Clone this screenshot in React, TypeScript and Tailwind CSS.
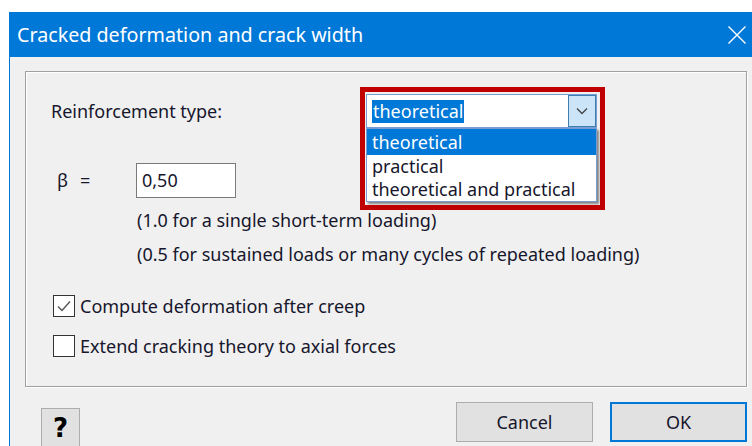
const ink = "text-[#16162c]";

function CheckBox({ checked }: { checked?: boolean }) {
  return (
    <span className="flex h-[22px] w-[22px] shrink-0 items-center justify-center border border-[#333] bg-white">
      {checked && (
        <svg width="16" height="14" viewBox="0 0 16 14">
          <path d="M2 7.5 L6 11.5 L14 2.5" fill="none" stroke="#555" strokeWidth="1.4" />
        </svg>
      )}
    </span>
  );
}

function TypeCombo() {
  const options = ["theoretical", "practical", "theoretical and practical"];
  return (
    <div className="relative h-[34px] w-[231px]">
      <div className="flex h-full w-full items-stretch border border-[#7a9cd3] bg-white">
        <div className="flex flex-1 items-center pl-[5px]">
          <span className="bg-[#0078d7] px-[1px] leading-[23px] text-white">theoretical</span>
        </div>
        <div className="flex w-[28px] items-center justify-center border border-[#3c7fb1] bg-[#cce4f7]">
          <svg width="12" height="8" viewBox="0 0 12 8">
            <path d="M1 1.5 L6 6.5 L11 1.5" fill="none" stroke="#444" strokeWidth="1.3" />
          </svg>
        </div>
      </div>

      {/* open list */}
      <div className="absolute left-0 top-full w-[231px] border border-[#7a9cd3] bg-white shadow-[2px_2px_2px_rgba(0,0,0,0.45)]">
        {options.map((o, i) => (
          <div
            key={o}
            className={
              i === 0
                ? "flex h-[26px] items-center bg-[#0078d7] pl-[5px] text-white"
                : `flex h-[23px] items-center pl-[5px] ${ink}`
            }
          >
            {o}
          </div>
        ))}
      </div>

      {/* highlight frame */}
      <div className="pointer-events-none absolute left-[-6px] top-[-7px] h-[123px] w-[245px] border-[5px] border-[#c00000]" />
    </div>
  );
}

export default function App() {
  return (
    <div
      className={`h-[446px] w-[752px] overflow-hidden bg-white pl-[9px] pt-[12px] text-[18px] ${ink}`}
      style={{ fontFamily: '"Noto Sans", "Open Sans", sans-serif' }}
    >
      <div className="flex h-[434px] flex-col">
        <div className="flex h-[45px] shrink-0 items-center justify-between bg-[#0078d7] pl-[8px] pr-[5px] text-white">
          <span className="text-[19.7px]">Cracked deformation and crack width</span>
          <svg width="20" height="20" viewBox="0 0 20 20">
            <path d="M1.5 1.5 L18.5 18.5 M18.5 1.5 L1.5 18.5" stroke="#fff" strokeWidth="1.4" />
          </svg>
        </div>

        <div className="flex-1 border-l border-[#0078d7] bg-[#f0f0f0] pl-[15px] pt-[14px]">
          <div className="flex h-[316px] w-[722px] flex-col border border-[#a0a0a0] pl-[25px] pt-[22px] shadow-[inset_1px_1px_0_#fff,1px_1px_0_#fff]">
            <div className="flex h-[34px] items-center">
              <span className="w-[315px]">Reinforcement type:</span>
              <TypeCombo />
            </div>

            <div className="mt-[35px] flex h-[35px] items-center">
              <span className="ml-[6px] w-[23px]">β</span>
              <span className="w-[56px]">=</span>
              <div className="flex h-[35px] w-[100px] items-center border border-[#7a7a7a] bg-white pl-[5px]">0,50</div>
            </div>

            <div className="ml-[86px] mt-[10px] leading-[24px]">(1.0 for a single short-term loading)</div>
            <div className="ml-[86px] mt-[10px] leading-[24px]">
              (0.5 for sustained loads or many cycles of repeated loading)
            </div>

            <label className="ml-[2px] mt-[28px] flex h-[24px] items-center gap-[5px]">
              <CheckBox checked />
              Compute deformation after creep
            </label>
            <label className="ml-[2px] mt-[16px] flex h-[24px] items-center gap-[5px]">
              <CheckBox />
              Extend cracking theory to axial forces
            </label>
          </div>

          <div className="flex w-[722px] items-start justify-between">
            <button
              className="ml-[16px] mt-[21px] flex h-[42px] w-[39px] items-start justify-center border border-[#adadad] bg-[#e1e1e1] pt-[2px] text-[26px] font-bold leading-[34px] text-black"
              style={{ fontFamily: '"DejaVu Sans", sans-serif' }}
            >
              ?
            </button>
            <div className="mt-[15px] flex gap-[17px]">
              <button className="h-[40px] w-[137px] border border-[#adadad] bg-[#e1e1e1]">Cancel</button>
              <button className="h-[40px] w-[137px] border-2 border-[#0078d7] bg-[#e1e1e1]">OK</button>
            </div>
          </div>
        </div>
      </div>
    </div>
  );
}
